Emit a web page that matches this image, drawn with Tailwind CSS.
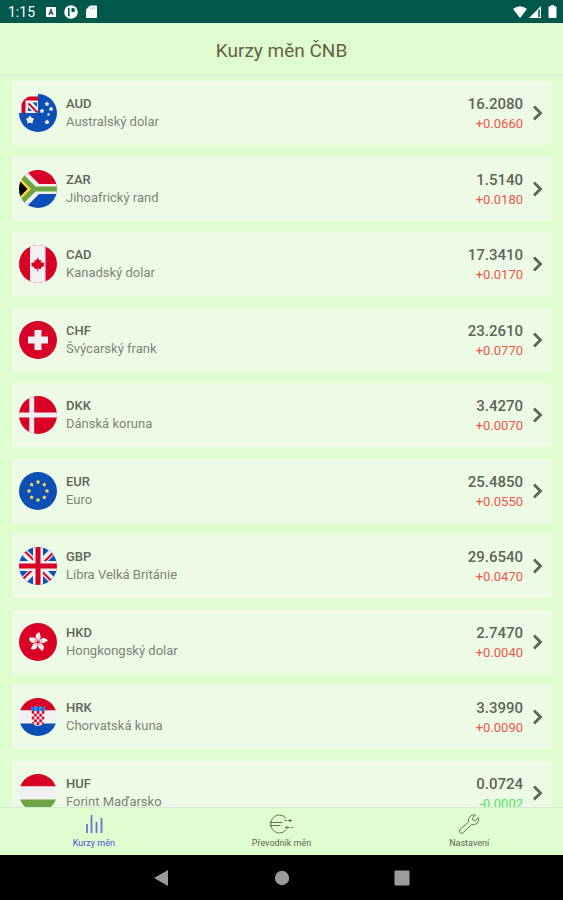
<!DOCTYPE html>
<html lang="cs">
<head>
    <meta charset="UTF-8">
    <meta name="viewport" content="width=device-width, initial-scale=1.0">
    <title>Kurzy měn ČNB</title>
    <script src="https://cdn.jsdelivr.net/npm/@tailwindcss/browser@4"></script>
</head>
<body class="h-screen flex flex-col overflow-hidden bg-[#dffdcf] font-[Roboto,sans-serif] text-[#5c6658]">
    <!-- Status bar -->
    <div class="h-[23px] shrink-0 flex items-center justify-between bg-[#00574b] text-white pl-2 pr-[6px]">
        <div class="flex items-center gap-2">
            <span class="text-[14px] leading-4 w-[30px]">1:15</span>
            <svg class="w-[10px] h-[10px]" viewBox="0 0 10 10"><rect width="10" height="10" rx="1" fill="#fff"/><path d="M3 8 5 2.5 7 8M3.8 6.2h2.4" fill="none" stroke="#00574b" stroke-width="1.2"/></svg>
            <svg class="w-[14px] h-[14px]" viewBox="0 0 14 14"><circle cx="7" cy="7" r="6.8" fill="#fff"/><path d="M4.8 2.8v8.4" fill="none" stroke="#00574b" stroke-width="1.6"/><path d="M7.500 3h1.500a2 2 0 0 1 0 4H7.500z" fill="#00574b"/></svg>
            <svg class="w-[11px] h-[13px]" viewBox="0 0 11 13"><path d="M4 .5h6a1 1 0 0 1 1 1V12a1 1 0 0 1-1 1H1a1 1 0 0 1-1-1V4.500z" fill="#fff"/><path d="M4.300 2.200v2M6.300 2.200v2M8.300 2.200v2" stroke="#00574b" stroke-width=".7" opacity=".5"/></svg>
        </div>
        <div class="flex items-center gap-[2px]">
            <svg class="w-[14px] h-[12px]" viewBox="0 0 14 12"><path d="M0 3Q7-2.500 14 3L7 12z" fill="#fff"/></svg>
            <svg class="w-[13px] h-[12px]" viewBox="0 0 13 12"><path d="M0 12 12 0v12z" fill="#fff"/><path d="M9.200 4.500v6.500h1.600V3z" fill="#00574b"/></svg>
            <svg class="w-[9px] h-[13px] ml-1" viewBox="0 0 9 13"><path d="M3 0h3v1.300h1.500a1 1 0 0 1 1 1V12a1 1 0 0 1-1 1h-6a1 1 0 0 1-1-1V2.300a1 1 0 0 1 1-1H3z" fill="#fff"/></svg>
        </div>
    </div>

    <!-- Header -->
    <header class="h-[53px] shrink-0 flex items-center justify-center border-b border-[#d3efd5] pt-1">
        <h1 class="text-[19px] leading-6 text-[#66604a]">Kurzy měn ČNB</h1>
    </header>

    <!-- Rates -->
    <main class="flex-1 min-h-0 overflow-y-auto [scrollbar-width:none] pt-[5px] pl-3 pr-[11px]">
        <ul id="rates"></ul>
    </main>

    <!-- Tabs -->
    <nav class="h-[48px] shrink-0 grid grid-cols-3 border-t border-[#cfebd6] text-[9px] leading-3">
        <a href="#kurzy" class="flex flex-col items-center pt-[6px] gap-[3px] text-[#4a50d8]">
            <svg class="w-[24px] h-[20px]" viewBox="0 0 24 20" fill="none" stroke="#6a74cf" stroke-width="1.800"><path d="M5 10v9M9.500 1v18M14.500 8v11M19.500 4v15"/></svg>
            Kurzy měn
        </a>
        <a href="#prevodnik" class="flex flex-col items-center pt-[6px] gap-[3px]">
            <svg class="w-[24px] h-[20px]" viewBox="0 0 24 20" fill="none" stroke="#66735f" stroke-width="1"><path d="M17 4.500Q14.500 1 10.500 1Q4.500 1 2 7.500M2 12.500Q4.500 19 10.500 19Q14.500 19 17 15.500M.500 8.500h13M.500 11.500h11M2 7v6M15.500 6.500h2M18.500 6.500h2M19 13.500h2M22 13.500h2"/><path d="m20.500 4.800 2.500 1.700-2.500 1.700zM18.500 11.800 16 13.500l2.500 1.700z" fill="#4d5947" stroke="none"/></svg>
            Převodník měn
        </a>
        <a href="#nastaveni" class="flex flex-col items-center pt-[6px] gap-[3px]">
            <svg class="w-[24px] h-[20px]" viewBox="0 0 24 20" fill="none" stroke="#66735f" stroke-width="1" stroke-linejoin="round"><path d="M18.500 1.200a5.300 5.300 0 0 0-6.800 6.600L3 15.500a2.200 2.200 0 0 0 3.200 3.200l8.400-8.200a5.300 5.300 0 0 0 6.700-6.900L18.200 6.500l-2.300-.5-.5-2.200z"/></svg>
            Nastavení
        </a>
    </nav>

    <!-- System buttons -->
    <div class="h-[45px] shrink-0 flex items-center justify-center gap-[104px] bg-black">
        <button aria-label="Zpět"><svg class="w-4 h-4" viewBox="0 0 16 16"><path d="M14 0v16L0 8z" fill="#9b9b9b"/></svg></button>
        <button aria-label="Domů"><svg class="w-4 h-4" viewBox="0 0 16 16"><circle cx="8" cy="8" r="7.200" fill="#9b9b9b"/></svg></button>
        <button aria-label="Aplikace"><svg class="w-4 h-4" viewBox="0 0 16 16"><rect x=".5" y=".5" width="15" height="15" rx="1" fill="#9b9b9b"/></svg></button>
    </div>

    <script>
        const rates = [
            ["AUD", "Australský dolar", "16.2080", "+0.0660"],
            ["ZAR", "Jihoafrický rand", "1.5140", "+0.0180"],
            ["CAD", "Kanadský dolar", "17.3410", "+0.0170"],
            ["CHF", "Švýcarský frank", "23.2610", "+0.0770"],
            ["DKK", "Dánská koruna", "3.4270", "+0.0070"],
            ["EUR", "Euro", "25.4850", "+0.0550"],
            ["GBP", "Libra Velká Británie", "29.6540", "+0.0470"],
            ["HKD", "Hongkongský dolar", "2.7470", "+0.0040"],
            ["HRK", "Chorvatská kuna", "3.3990", "+0.0090"],
            ["HUF", "Forint Maďarsko", "0.0724", "-0.0002"],
        ];

        // Five-pointed star
        function star(cx, cy, r, color) {
            let points = "";
            for (let i = 0; i < 10; i++) {
                const a = Math.PI * i / 5 - Math.PI / 2;
                const d = i % 2 ? r * 0.65 : r;
                points += `${(cx + d * Math.cos(a)).toFixed(2)},${(cy + d * Math.sin(a)).toFixed(2)} `;
            }
            return `<polygon points="${points}" fill="${color}"/>`;
        }

        function ring() {
            let out = "";
            for (let i = 0; i < 8; i++) {
                const a = Math.PI * i / 4;
                out += star(19 + 9 * Math.cos(a), 19 + 9 * Math.sin(a), 2.2, "#f2d35c");
            }
            return out;
        }

        function petals() {
            let out = "";
            for (let i = 0; i < 5; i++) {
                out += `<g transform="rotate(${i * 72 + 8} 19 19)"><path d="M19 18C14.500 15.500 15 10.500 19.500 9C19 11 23.500 13.500 19 18z" fill="#f4f4f4"/><path d="M19 17q-.6-1-.2-2.500" fill="none" stroke="#d80027" stroke-width=".4"/></g>`;
            }
            return out;
        }

        function checks() {
            let out = "";
            for (let y = 0; y < 5; y++) {
                for (let x = 0; x < 5; x++) {
                    if ((x + y) % 2 === 0) out += `<rect x="${12.5 + x * 2.6}" y="${13 + y * 2.8}" width="2.6" height="2.8" fill="#d80027"/>`;
                }
            }
            return out;
        }

        const flags = {
            AUD: `<path d="M19 0h19v38H0V19h19z" fill="#0d50b5"/><path d="M2.500 2.500H19V19H2.500z" fill="#f0f0f0"/><path d="M9 17v-4l4 4zM13.500 8.500H18V13z" fill="#0d50b5"/><path d="M7 2.500h12v4H6.500V19h-4V8z" fill="#d80027"/><path d="m9.500 9.500 9 9" stroke="#d80027" stroke-width="1.800"/>`
                + star(11, 26, 4.4, "#f0f0f0") + star(28, 10, 2.4, "#f0f0f0") + star(23, 17, 2.4, "#f0f0f0") + star(32, 15, 2.4, "#f0f0f0") + star(29.5, 20.5, 1.6, "#f0f0f0") + star(28, 28, 2.6, "#f0f0f0"),
            ZAR: `<path d="M0 0h38v19H0z" fill="#d80027"/><path d="M0 19h38v19H0z" fill="#0d50b5"/><path d="M-1 0 18 19-1 38M18 19h21" fill="none" stroke="#f0f0f0" stroke-width="10"/><path d="M-3 2 14 19-3 36z" fill="#ffda44"/><path d="M-3 7 8.500 19-3 31z" fill="#000"/><path d="M-1 2.500 15.500 19-1 35.500M15 19h24" fill="none" stroke="#6da544" stroke-width="5"/>`,
            CAD: `<rect width="38" height="38" fill="#d80027"/><path d="M11 0h15.500v38H11z" fill="#f0f0f0"/><path d="m18.800 12.500 1.600 3 1.800-.8-.5 3.300 1.800-1.300.5 1.200h1.500l-.8 1.800.9.700-3.700 2.400.3 1.300-2.900-.4v2.500h-1v-2.500l-2.900.4.300-1.300-3.700-2.400.9-.7-.8-1.800h1.500l.5-1.200 1.800 1.300-.5-3.300 1.800.8z" fill="#d80027"/>`,
            CHF: `<rect width="38" height="38" fill="#d80027"/><path d="M15.500 9h7v6.500H29v7h-6.500V29h-7v-6.500H9v-7h6.500z" fill="#f0f0f0"/>`,
            DKK: `<rect width="38" height="38" fill="#d80027"/><path d="M10.300 0h4.900v16.500H38v4.900H15.200V38h-4.900V21.400H0v-4.900h10.300z" fill="#f0f0f0"/>`,
            EUR: `<rect width="38" height="38" fill="#0d50b5"/>` + ring(),
            GBP: `<rect width="38" height="38" fill="#0d50b5"/><path d="m3 3 32 32M35 3 3 35" stroke="#f0f0f0" stroke-width="7"/><path d="M5 3.500 17 15.500M35 5 22 18M21 22.500 33 34.500M3 33 16 20" stroke="#d80027" stroke-width="2"/><path d="M19 0v38M0 19h38" stroke="#f0f0f0" stroke-width="10"/><path d="M19 0v38M0 19h38" stroke="#d80027" stroke-width="5"/>`,
            HKD: `<rect width="38" height="38" fill="#d80027"/>` + petals(),
            HRK: `<path d="M0 0h38v12.500H0z" fill="#d80027"/><path d="M0 12.500h38v13H0z" fill="#f0f0f0"/><path d="M0 25.500h38V38H0z" fill="#0d50b5"/><path d="M12.500 13h13v9q0 5-6.500 6-6.500-1-6.500-6z" fill="#f0f0f0"/><clipPath id="shield"><path d="M12.500 13h13v9q0 5-6.500 6-6.500-1-6.500-6z"/></clipPath><g clip-path="url(#shield)">${checks()}</g><path d="m12 8 2.400 1.300L16.700 8 19 9.300 21.300 8l2.300 1.300L26 8l-.5 5h-13z" fill="#338af3"/><path d="M14.500 9.500v3M19 9.500v3M23.500 9.500v3" stroke="#0d50b5" stroke-width="1.500"/>`,
            HUF: `<path d="M0 0h38v12.500H0z" fill="#d80027"/><path d="M0 12.500h38v13H0z" fill="#f0f0f0"/><path d="M0 25.500h38V38H0z" fill="#6da544"/>`,
        };

        document.getElementById("rates").innerHTML = rates.map(([code, name, rate, change]) => `
            <li class="odd:mb-3 even:mb-[11px]">
                <a href="#${code}" class="h-16 flex items-center bg-[#edfbe6] px-[7px]">
                    <svg class="w-[38px] h-[38px] rounded-full overflow-hidden shrink-0" viewBox="0 0 38 38">${flags[code]}</svg>
                    <span class="flex-1 flex flex-col ml-[9px] text-[13px] leading-[18px]">
                        <span class="font-medium">${code}</span>
                        <span class="text-[#7b8577]">${name}</span>
                    </span>
                    <span class="flex flex-col items-end leading-[19px] mr-2 pt-[2px]">
                        <span class="text-[15px] font-medium">${rate}</span>
                        <span class="text-[13px] ${change[0] === "-" ? "text-[#4be552]" : "text-[#f0544a]"}">${change}</span>
                    </span>
                    <svg class="w-[14px] h-4" viewBox="0 0 14 16" fill="none" stroke="#5a6656" stroke-width="2.800"><path d="m3 1.500 6.500 6.500L3 14.500"/></svg>
                </a>
            </li>`).join("");
    </script>
</body>
</html>
